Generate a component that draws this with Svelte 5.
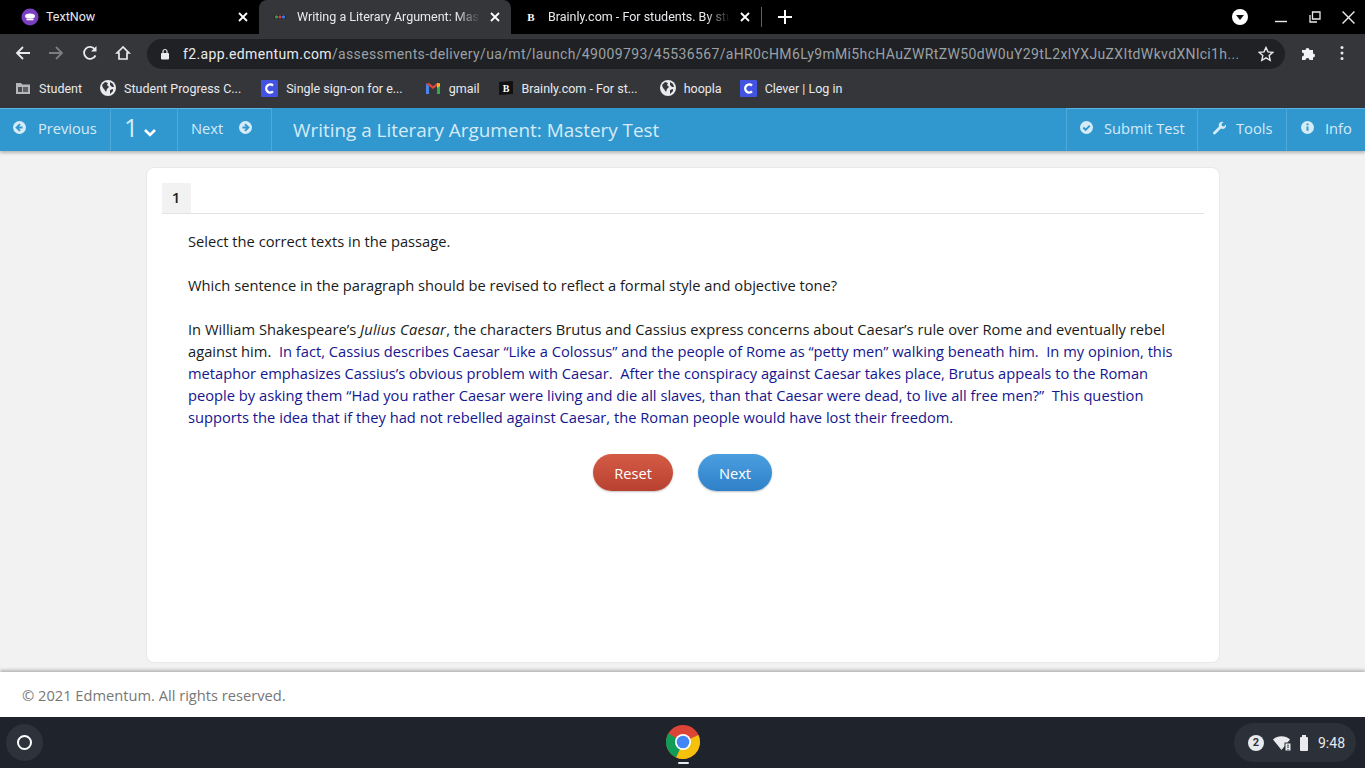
<script>
  const bookmarks = [
    { t: 'Student', i: 'folder' },
    { t: 'Student Progress C...', i: 'globe' },
    { t: 'Single sign-on for e...', i: 'c' },
    { t: 'gmail', i: 'm' },
    { t: 'Brainly.com - For st...', i: 'b' },
    { t: 'hoopla', i: 'globe' },
    { t: 'Clever | Log in', i: 'c' }
  ];
</script>

{#snippet close()}
  <svg class="x" viewBox="0 0 10 10" width="10" height="10"><path d="M1 1l8 8M9 1l-8 8" stroke="#fff" stroke-width="1.8" fill="none"/></svg>
{/snippet}
{#snippet globe()}
  <svg viewBox="0 0 16 16" width="16" height="16"><circle cx="8" cy="8" r="8" fill="#e8eaed"/><path d="M2 5l3-3 3 1-1 2 2 2-2 2-1 3-2-3-1-1zM10 2l3 2 1 3-2 0-2-2zM10 10l3-1 0 2-3 3z" fill="#35363a"/></svg>
{/snippet}
{#snippet cIcon()}
  <svg viewBox="0 0 17 17" width="17" height="17"><rect width="17" height="17" rx="1" fill="#4153e0"/><path d="M12 5.6a4 4 0 1 0 0 5.8" stroke="#fff" stroke-width="2.4" fill="none"/></svg>
{/snippet}
{#snippet bIcon()}
  <svg viewBox="0 0 16 16" width="16" height="16"><path d="M1 2l14-1v13L1 15z" fill="#111"/><text x="8" y="11.5" text-anchor="middle" font-size="10" font-weight="700" font-family="Liberation Serif, serif" fill="#fff">B</text></svg>
{/snippet}

<div class="page">
  <div class="tabs">
    <div class="tab first">
      <svg viewBox="0 0 18 18" width="18" height="18"><circle cx="9" cy="9" r="8.5" fill="#7a3fc0"/><ellipse cx="9" cy="8" rx="5" ry="2.6" fill="#fff"/><path d="M5.5 11.5h7" stroke="#fff" stroke-width="1.6"/></svg>
      <span class="tt">TextNow</span>
      {@render close()}
    </div>
    <div class="tab active">
      <svg viewBox="0 0 16 16" width="16" height="16"><rect x="2" y="6" width="12" height="4" rx="2" fill="#1c1c1c"/><circle cx="4.5" cy="8" r="1.7" fill="#2e9b5a"/><circle cx="8" cy="8" r="1.7" fill="#d83a3a"/><circle cx="11.5" cy="8" r="1.7" fill="#3a7ad8"/></svg>
      <span class="tt fade">Writing a Literary Argument: Mastery Test</span>
      {@render close()}
    </div>
    <div class="tab third">
      <svg viewBox="0 0 16 16" width="16" height="16"><text x="8" y="12" text-anchor="middle" font-size="11" font-weight="700" font-family="Liberation Serif, serif" fill="#fff">B</text></svg>
      <span class="tt fade">Brainly.com - For students. By students.</span>
      {@render close()}
    </div>
    <div class="sep"></div>
    <svg class="plus" viewBox="0 0 14 14" width="14" height="14"><path d="M7 0v14M0 7h14" stroke="#fff" stroke-width="2"/></svg>
    <div class="winctl">
      <svg class="prof" viewBox="0 0 16 16" width="16" height="16"><circle cx="8" cy="8" r="8" fill="#fff"/><path d="M4 6h8l-4 5z" fill="#111"/></svg>
      <svg class="min" viewBox="0 0 12 12" width="12" height="12"><path d="M0 10.5h12" stroke="#e8eaed" stroke-width="1.4"/></svg>
      <svg class="rest" viewBox="0 0 12 12" width="12" height="12"><path d="M1 4v7h7M3.5 1h7.500v7h-7.500z" stroke="#e8eaed" stroke-width="1.300" fill="none"/></svg>
      <svg class="wx" viewBox="0 0 12 12" width="13" height="13"><path d="M0.500 0.500l11 11M11.500 0.500l-11 11" stroke="#e8eaed" stroke-width="1.300"/></svg>
    </div>
  </div>

  <div class="toolbar">
    <svg class="nav back" viewBox="0 0 16 16" width="16" height="16"><path d="M15 8H2M8 2L2 8l6 6" stroke="#e8eaed" stroke-width="1.800" fill="none"/></svg>
    <svg class="nav fwd" viewBox="0 0 16 16" width="16" height="16"><path d="M1 8h13M8 2l6 6-6 6" stroke="#7d7e82" stroke-width="1.800" fill="none"/></svg>
    <svg class="nav rel" viewBox="0 0 16 16" width="16" height="16"><path d="M13.500 10.500A6 6 0 1 1 13 4.500" stroke="#e8eaed" stroke-width="1.800" fill="none"/><path d="M14.500 1v5.500H9z" fill="#e8eaed"/></svg>
    <svg class="nav home" viewBox="0 0 16 16" width="16" height="16"><path d="M8 2L2 8h2v6h8V8h2z" stroke="#e8eaed" stroke-width="1.700" fill="none"/></svg>
    <div class="omni">
      <svg viewBox="0 0 10 12" width="10" height="12"><rect x="1" y="5" width="8" height="6.500" rx="1" fill="#e8eaed"/><path d="M3 5V3.500a2 2 0 0 1 4 0V5" stroke="#e8eaed" fill="none" stroke-width="1.200"/></svg>
      <span class="url"><b>f2.app.edmentum.com</b>/assessments-delivery/ua/mt/launch/49009793/45536567/aHR0cHM6Ly9mMi5hcHAuZWRtZW50dW0uY29tL2xlYXJuZXItdWkvdXNlci1h...</span>
      <svg viewBox="0 0 16 16" width="16" height="16"><path d="M8 1.500l2 4.400 4.700.5-3.500 3.200 1 4.700L8 11.900l-4.200 2.400 1-4.700L1.300 6.400 6 5.900z" stroke="#e8eaed" stroke-width="1.400" fill="none"/></svg>
    </div>
    <svg class="puzzle" viewBox="0 0 16 16" width="16" height="16"><path d="M1 5h3.500a2 2 0 1 1 4 0H12v3.500a2 2 0 1 1 0 4V15H8.500a2 2 0 1 0-4 0H1v-3.500a2 2 0 1 0 0-4z" fill="#f1f3f4"/></svg>
    <svg class="dots" viewBox="0 0 4 16" width="4" height="16"><circle cx="2" cy="2.500" r="1.500" fill="#e8eaed"/><circle cx="2" cy="8" r="1.500" fill="#e8eaed"/><circle cx="2" cy="13.500" r="1.500" fill="#e8eaed"/></svg>
  </div>

  <div class="bookmarks">
    {#each bookmarks as b}
      <div class="bm">
        {#if b.i === 'folder'}
          <svg viewBox="0 0 16 14" width="16" height="14"><path d="M1 2h5l1.500 1.500H15V13H1z" fill="#b5b7ba"/><rect x="3" y="6" width="4" height="5" fill="#4a4b4f"/><rect x="8" y="6" width="5" height="5" fill="#5f6064"/></svg>
        {:else if b.i === 'globe'}
          {@render globe()}
        {:else if b.i === 'c'}
          {@render cIcon()}
        {:else if b.i === 'm'}
          <svg viewBox="0 0 16 12" width="16" height="12"><path d="M1 12V1.500L4 4v8z" fill="#4a86e8"/><path d="M15 12V1.500L12 4v8z" fill="#2fa84f"/><path d="M1 1.500L8 7l7-5.500L12 1 8 4.300 4 1z" fill="#e2463a"/><path d="M12 1l3 .5V4l-3 2z" fill="#f6bd2a"/></svg>
        {:else}
          {@render bIcon()}
        {/if}
        <span>{b.t}</span>
      </div>
    {/each}
  </div>

  <header class="appbar">
    <div class="seg prev">
      <svg viewBox="0 0 12 12" width="13" height="13"><circle cx="6" cy="6" r="6" fill="#d5ebf7"/><path d="M6.500 2.800L3.300 6l3.200 3.200M3.800 6h5" stroke="#3197cf" stroke-width="1.700" fill="none"/></svg>
      <span>Previous</span>
    </div>
    <div class="seg num">
      <span class="n">1</span>
      <svg viewBox="0 0 14 9" width="14" height="9"><path d="M2 2l5 5 5-5" stroke="#fff" stroke-width="2.600" fill="none"/></svg>
    </div>
    <div class="seg next">
      <span>Next</span>
      <svg viewBox="0 0 12 12" width="13" height="13"><circle cx="6" cy="6" r="6" fill="#d5ebf7"/><path d="M5.500 2.800L8.700 6 5.500 9.200M8.200 6h-5" stroke="#3197cf" stroke-width="1.700" fill="none"/></svg>
    </div>
    <h1>Writing a Literary Argument: Mastery Test</h1>
    <div class="seg submit">
      <svg viewBox="0 0 12 12" width="13" height="13"><circle cx="6" cy="6" r="6" fill="#d5ebf7"/><path d="M3 6l2.200 2.200L9 4.200" stroke="#3197cf" stroke-width="1.800" fill="none"/></svg>
      <span>Submit Test</span>
    </div>
    <div class="seg tools">
      <svg viewBox="0 0 14 14" width="14" height="14"><path d="M1.500 11L7 5.500a3.500 3.500 0 0 1 4.500-4.500L9.500 3l.5 2 2 .5 2-2a3.500 3.500 0 0 1-5 4L3.500 13a1.400 1.400 0 0 1-2-2z" fill="#d5ebf7"/></svg>
      <span>Tools</span>
    </div>
    <div class="seg info">
      <svg viewBox="0 0 12 12" width="13" height="13"><circle cx="6" cy="6" r="6" fill="#d5ebf7"/><path d="M6 5v4M6 2.300v1.600" stroke="#3197cf" stroke-width="1.800"/></svg>
      <span>Info</span>
    </div>
  </header>

  <main class="content">
    <section class="card">
      <div class="qtabs"><span class="qnum">1</span></div>
      <div class="question">
        <p>Select the correct texts in the passage.</p>
        <p>Which sentence in the paragraph should be revised to reflect a formal style and objective tone?</p>
        <p>In William Shakespeare’s <em>Julius Caesar</em>, the characters Brutus and Cassius express concerns about Caesar’s rule over Rome and eventually rebel against him.&nbsp; <span class="sel">In fact, Cassius describes Caesar “Like a Colossus” and the people of Rome as “petty men” walking beneath him.</span>&nbsp; <span class="sel">In my opinion, this metaphor emphasizes Cassius’s obvious problem with Caesar.</span>&nbsp; <span class="sel">After the conspiracy against Caesar takes place, Brutus appeals to the Roman people by asking them “Had you rather Caesar were living and die all slaves, than that Caesar were dead, to live all free men?”</span>&nbsp; <span class="sel">This question supports the idea that if they had not rebelled against Caesar, the Roman people would have lost their freedom.</span></p>
      </div>
      <div class="actions">
        <button class="reset">Reset</button>
        <button class="nextbtn">Next</button>
      </div>
    </section>
  </main>

  <footer class="foot">© 2021 Edmentum. All rights reserved.</footer>

  <div class="shelf">
    <div class="launcher"><span class="ring"></span></div>
    <div class="chrome">
      <svg viewBox="0 0 36 36" width="36" height="36">
        <circle cx="18" cy="18" r="17" fill="#db4437"/>
        <path d="M18 18l15.500-7A17 17 0 0 1 11 33.500z" fill="#f4c20d"/>
        <path d="M18 18L3.300 9.500A17 17 0 0 0 11 33.500L18 18z" fill="#0f9d58"/>
        <circle cx="18" cy="18" r="8" fill="#fff"/>
        <circle cx="18" cy="18" r="6.300" fill="#4285f4"/>
      </svg>
      <span class="dash"></span>
    </div>
    <div class="tray">
      <span class="badge">2</span>
      <svg class="wifi" viewBox="0 0 18 16" width="18" height="16"><path d="M0 4.500a13 13 0 0 1 17 0L8.500 15z" fill="#e8eaed"/><rect x="12" y="8" width="6" height="8" fill="#e8eaed" stroke="#2c3038"/><path d="M15 9.500v3.500M15 14v1" stroke="#2c3038"/></svg>
      <svg class="batt" viewBox="0 0 10 16" width="10" height="16"><rect x="3" y="0" width="4" height="2" fill="#e8eaed"/><rect x="1" y="2" width="8" height="14" rx="1" fill="#e8eaed"/></svg>
      <span class="clock">9:48</span>
    </div>
  </div>
</div>

<style>
  :global(body) { margin: 0; }
  .page { width: 1365px; height: 768px; overflow: hidden; display: flex; flex-direction: column; font-family: "Open Sans", sans-serif; background: #f2f2f2; }

  .tabs { height: 34px; flex: none; background: #000; display: flex; align-items: center; color: #e8eaed; font: 12.500px Roboto, sans-serif; }
  .tab { height: 34px; display: flex; align-items: center; box-sizing: border-box; padding-left: 21px; padding-bottom: 1px; }
  .first { width: 259px; }
  .active { width: 252px; background: #35363a; border-radius: 8px 8px 0 0; padding-left: 13px; }
  .third { width: 250px; padding-left: 12px; }
  .tt { margin-left: 7px; flex: 1; min-width: 0; white-space: nowrap; overflow: hidden; }
  .active .tt { margin-left: 9px; }
  .third .tt { margin-left: 9px; }
  .fade { -webkit-mask-image: linear-gradient(90deg, #000 85%, transparent 98%); mask-image: linear-gradient(90deg, #000 85%, transparent 98%); }
  .x { flex: none; margin: 0 11px 0 6px; }
  .sep { width: 1px; height: 20px; background: #5f6064; flex: none; }
  .plus { flex: none; margin-left: 16px; }
  .winctl { margin-left: auto; display: flex; align-items: center; padding-right: 10px; }
  .prof { margin-right: 27px; }
  .min { margin-right: 22px; }
  .rest { margin-right: 21px; }

  .toolbar { height: 38px; flex: none; background: #35363a; display: flex; align-items: center; padding-left: 15px; box-sizing: border-box; }
  .nav { flex: none; margin-right: 17px; }
  .fwd { margin-right: 18px; }
  .home { margin-right: 16px; }
  .omni { width: 1138px; height: 30px; margin-top: 1px; border-radius: 15px; background: #202124; display: flex; align-items: center; padding: 0 11px 0 13px; box-sizing: border-box; flex: none; }
  .url { flex: 1; min-width: 0; margin: 0 20px 0 13px; white-space: nowrap; overflow: hidden; font: 14px Roboto, sans-serif; color: #9aa0a6; letter-spacing: .36px; }
  .url b { font-weight: 400; color: #e8eaed; }
  .puzzle { margin-left: 16px; flex: none; }
  .dots { margin-left: 23px; flex: none; }

  .bookmarks { height: 36px; flex: none; background: #35363a; display: flex; align-items: center; padding: 0 0 4px 15px; box-sizing: border-box; gap: 18px; font: 12.500px Roboto, sans-serif; color: #e8eaed; }
  .bm { display: flex; align-items: center; gap: 8px; white-space: nowrap; }
  .bm:nth-child(3) { margin-left: 2px; }
  .bm:nth-child(4) { margin-left: 4px; }
  .bm:nth-child(6) { margin-left: 4px; }

  .appbar { height: 43px; flex: none; background: #3197cf; display: flex; align-items: stretch; box-shadow: 0 2px 3px rgba(0,0,0,.25); color: #d5ebf7; font-size: 14.670px; position: relative; }
  .seg { display: flex; align-items: center; box-sizing: border-box; border-right: 1px solid #4ea8d9; box-shadow: inset 0 1px 0 #5fb2df; padding-bottom: 4px; }
  .prev { width: 111px; padding-left: 13px; gap: 12px; }
  .num { width: 67px; padding-left: 13px; gap: 5px; }
  .n { font-size: 25px; line-height: 1; }
  .num svg { margin-top: 9px; }
  .next { width: 94px; padding-left: 13px; gap: 16px; }
  h1 { flex: 1; margin: 0; font-size: 18.900px; font-weight: 400; padding-left: 21px; line-height: 44px; color: #d5ebf7; white-space: nowrap; }
  .submit { width: 132px; padding-left: 13px; gap: 11px; border-left: 1px solid #4ea8d9; }
  .tools { width: 89px; padding-left: 14px; gap: 10px; }
  .info { width: 78px; padding-left: 14px; gap: 11px; border-right: 0; }

  .content { flex: 1; min-height: 0; display: flex; justify-content: center; padding: 16px 0 9px; box-sizing: border-box; }
  .card { width: 1074px; box-sizing: border-box; background: #fff; border: 1px solid #e9e9e9; border-radius: 8px; padding: 15px 15px 0; }
  .qtabs { height: 30px; border-bottom: 1px solid #e3e3e3; }
  .qnum { display: block; width: 29px; height: 30px; background: #f2f2f2; text-align: center; font-size: 15px; font-weight: 600; line-height: 29px; color: #222; }
  .question { padding: 16px 26px 0 26.500px; font-size: 14.700px; line-height: 22px; color: #1a1a1a; }
  .question p { margin: 0 0 22px; }
  .question em { letter-spacing: .23px; }
  .sel { color: #16168f; }
  .actions { display: flex; justify-content: center; gap: 25px; margin-top: 26px; }
  button { height: 37px; border: 0; border-radius: 19px; font: 500 14.670px "Open Sans", sans-serif; color: #fff; padding: 0; box-shadow: 0 1px 2px rgba(0,0,0,.25); }
  .reset { width: 80px; background: linear-gradient(#d45c46, #b8402f); }
  .nextbtn { width: 74px; background: linear-gradient(#4a9fe0, #2f80c8); }

  .foot { height: 45px; flex: none; background: #fff; box-shadow: 0 -2px 3px rgba(0,0,0,.25); position: relative; display: flex; align-items: center; padding-left: 22px; font-size: 14.670px; color: #777; }

  .shelf { height: 51px; flex: none; background: #1f232b; display: flex; align-items: center; position: relative; }
  .launcher { width: 37px; height: 37px; margin-left: 6px; border-radius: 50%; background: #2e323a; display: flex; align-items: center; justify-content: center; }
  .ring { width: 11px; height: 11px; border: 2px solid #fff; border-radius: 50%; }
  .chrome { position: absolute; left: 665px; top: 7px; width: 36px; display: flex; flex-direction: column; align-items: center; }
  .chrome svg { display: block; }
  .dash { width: 11px; height: 2px; background: #e8eaed; margin-top: 2px; border-radius: 1px; }
  .tray { margin-left: auto; margin-right: 9px; height: 39px; width: 122px; box-sizing: border-box; border-radius: 20px; background: #2c3038; display: flex; align-items: center; padding-left: 13px; color: #e8eaed; }
  .badge { width: 16px; height: 16px; border-radius: 50%; background: #e8eaed; color: #2e323a; font: 700 11px/16px Roboto, sans-serif; text-align: center; margin-right: 9px; margin-left: 1px; }
  .batt { margin-left: 8px; }
  .clock { font: 14px Roboto, sans-serif; margin-left: 9px; }
</style>
